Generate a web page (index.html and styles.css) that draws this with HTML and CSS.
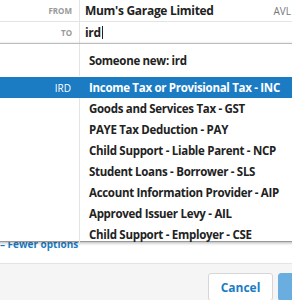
FILE: index.html
```html
<!DOCTYPE html>
<html lang="en">
  <head>
    <meta charset="UTF-8" />
    <title>Transfer money</title>
    <link rel="stylesheet" href="styles.css">
  </head>
  <body>
    <div class="panel">
      <div class="row">
        <div class="label">From</div>
        <div class="value">Mum's Garage Limited</div>
        <div class="code">AVL</div>
      </div>
      <div class="row">
        <div class="label">To</div>
        <div class="value">ird<span class="caret"></span></div>
      </div>
      <div class="hidden-fields"></div>
      <a class="fewer" href="#">&ndash; Fewer options</a>

      <div class="dropdown">
        <div class="option new">
          <div class="opt-code"></div>
          <div class="opt-name">Someone new: ird</div>
        </div>
        <div class="option active">
          <div class="opt-code">IRD</div>
          <div class="opt-name">Income Tax or Provisional Tax - INC</div>
        </div>
        <div class="option">
          <div class="opt-code"></div>
          <div class="opt-name">Goods and Services Tax - GST</div>
        </div>
        <div class="option">
          <div class="opt-code"></div>
          <div class="opt-name">PAYE Tax Deduction - PAY</div>
        </div>
        <div class="option">
          <div class="opt-code"></div>
          <div class="opt-name">Child Support - Liable Parent - NCP</div>
        </div>
        <div class="option">
          <div class="opt-code"></div>
          <div class="opt-name">Student Loans - Borrower - SLS</div>
        </div>
        <div class="option">
          <div class="opt-code"></div>
          <div class="opt-name">Account Information Provider - AIP</div>
        </div>
        <div class="option">
          <div class="opt-code"></div>
          <div class="opt-name">Approved Issuer Levy - AIL</div>
        </div>
        <div class="option">
          <div class="opt-code"></div>
          <div class="opt-name">Child Support - Employer - CSE</div>
        </div>
      </div>
    </div>

    <div class="footer">
      <button class="btn cancel">Cancel</button>
      <button class="btn save" aria-label="Save"></button>
    </div>
  </body>
</html>
```

FILE: styles.css
```css
body {
  margin: 0;
  font-family: 'Open Sans', sans-serif;
  font-size: 11px;
  color: #222;
  background-color: #fff;
  width: 292px;
  height: 300px;
  overflow: hidden;
}
.panel {
  position: relative;
  border-bottom: 1px solid #e4e4e4;
  height: 263px;
}
.row {
  display: flex;
  align-items: center;
  height: 21px;
  border-bottom: 1px solid #e4e4e4;
}
.label {
  width: 72px;
  padding-right: 7px;
  border-right: 1px solid #e4e4e4;
  align-self: stretch;
  display: flex;
  align-items: center;
  justify-content: flex-end;
  text-transform: uppercase;
  font-size: 8px;
  font-weight: bold;
  color: #999;
}
.value {
  flex: 1;
  padding-left: 5px;
  font-size: 12px;
  font-weight: bold;
  letter-spacing: -0.3px;
}
.code {
  color: #777;
  padding-right: 1px;
  font-size: 10px;
}
.caret {
  display: inline-block;
  width: 1px;
  height: 13px;
  margin-left: 1px;
  vertical-align: -2px;
  background-color: #222;
}
.hidden-fields {
  height: 193px;
}
.fewer {
  display: block;
  color: #1b7cc4;
  text-decoration: none;
  font-weight: bold;
  font-size: 10px;
  line-height: 14px;
}
.dropdown {
  position: absolute;
  top: 43px;
  left: -2px;
  width: 296px;
  height: 197px;
  background-color: #fff;
  border-top: 1px solid #bbb;
  border-bottom: 1px solid #999;
  box-shadow: 0 1px 3px rgba(0, 0, 0, 0.3);
}
.option {
  display: flex;
  height: 21px;
  align-items: center;
}
.option.new {
  height: 32px;
  border-bottom: 1px solid #fff;
}
.opt-code {
  width: 73px;
  padding-right: 8px;
  align-self: stretch;
  display: flex;
  align-items: center;
  justify-content: flex-end;
  border-right: 1px solid #e4e4e4;
  color: #fff;
  font-size: 10px;
}
.opt-name {
  padding-left: 9px;
  font-size: 11.5px;
  font-weight: bold;
  letter-spacing: -0.3px;
}
.option.active {
  background-color: #1b7cc4;
  color: #fff;
}
.option.active .opt-code {
  border-right-color: #1b7cc4;
}
.footer {
  background-color: #f5f5f5;
  height: 37px;
  display: flex;
  gap: 5px;
  padding: 9px 0 0 208px;
  box-sizing: border-box;
  overflow: hidden;
}
.btn {
  flex-shrink: 0;
  height: 28px;
  border-radius: 3px;
  font-family: 'Open Sans', sans-serif;
  font-size: 12px;
  font-weight: bold;
  cursor: pointer;
}
.cancel {
  width: 65px;
  background-color: #fff;
  border: 1px solid #d6d6d6;
  color: #1b7cc4;
}
.save {
  width: 74px;
  background-color: #6aaee0;
  border: 1px solid #6aaee0;
}
```
